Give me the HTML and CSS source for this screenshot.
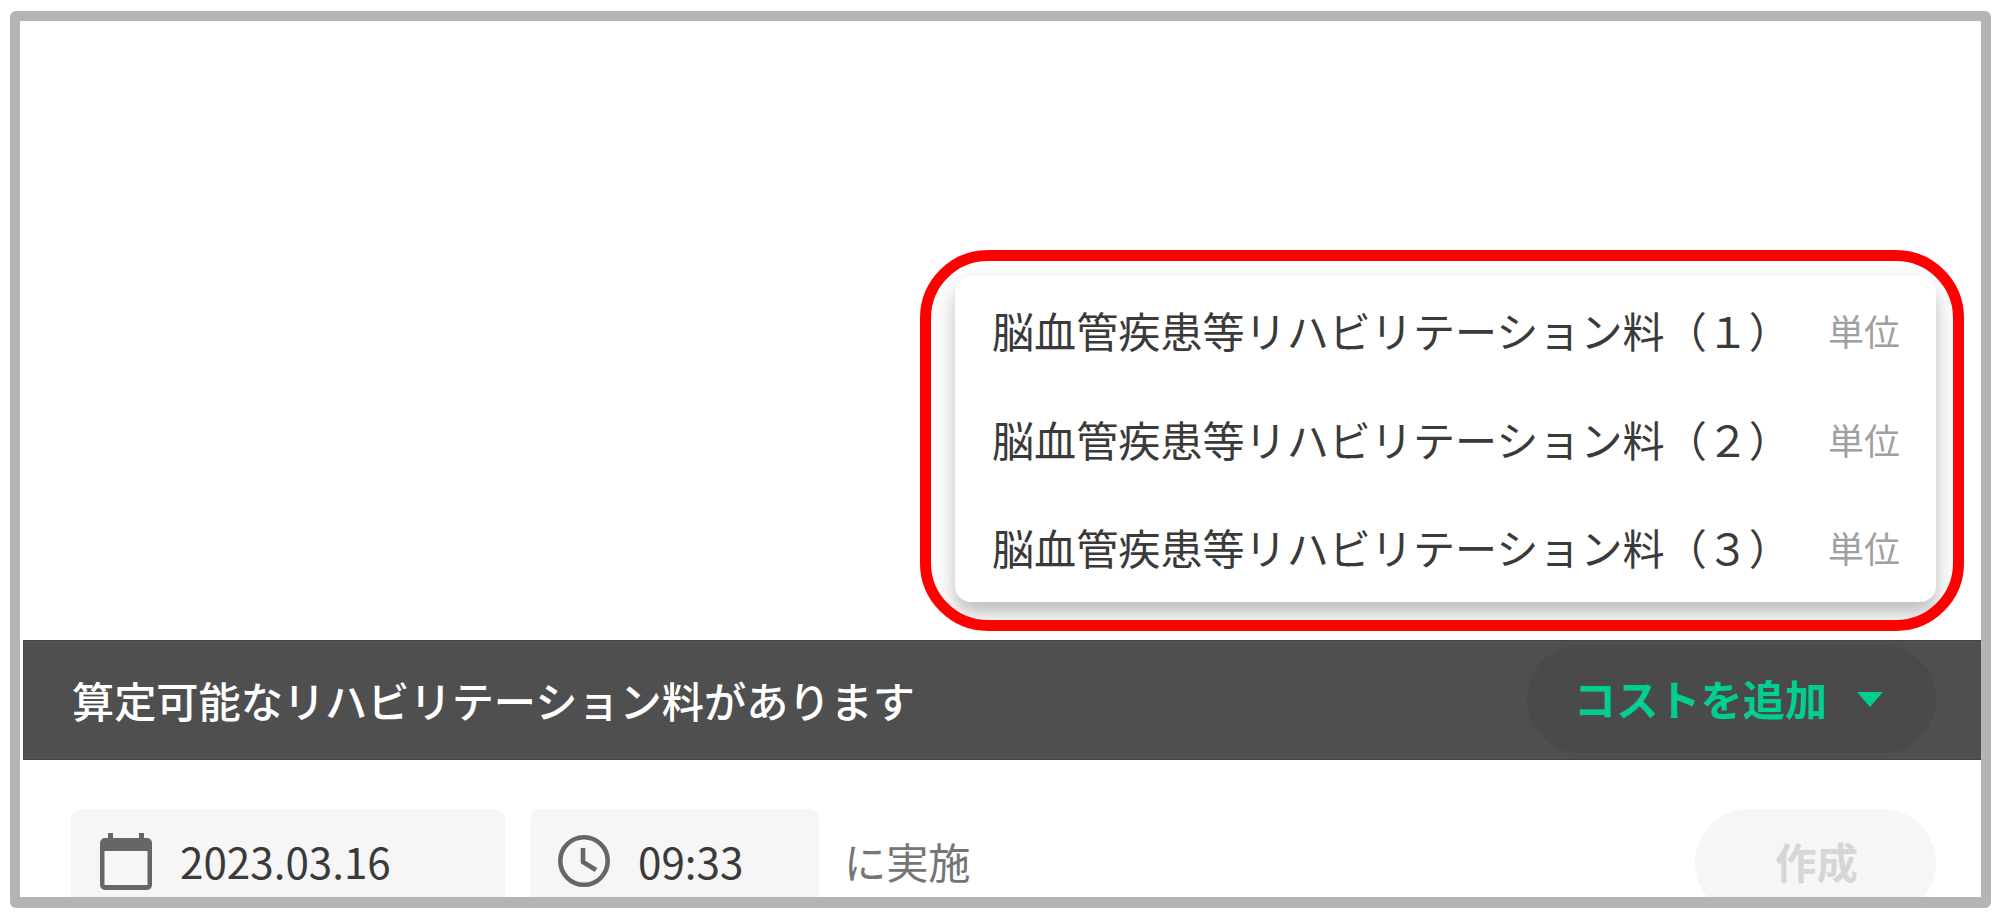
FILE: index.html
```html
<!DOCTYPE html>
<html lang="ja">
<head>
  <meta charset="UTF-8" />
  <title>リハビリテーション料</title>
  <meta name="viewport" content="width=device-width, initial-scale=1.0" />
  <link rel="stylesheet" href="styles.css">
</head>
<body>
  <main class="frame">
    <!-- Record area with the cost menu -->
    <section class="record">
      <div class="highlight">
        <ul class="cost-menu">
          <li><span>脳血管疾患等リハビリテーション料（１）</span><span class="unit">単位</span></li>
          <li><span>脳血管疾患等リハビリテーション料（２）</span><span class="unit">単位</span></li>
          <li><span>脳血管疾患等リハビリテーション料（３）</span><span class="unit">単位</span></li>
        </ul>
      </div>
    </section>

    <!-- Notice bar -->
    <section class="notice">
      <p>算定可能なリハビリテーション料があります</p>
      <button class="add-btn" type="button">
        <span>コストを追加</span>
        <svg class="caret" viewBox="0 0 26 15"><path d="M0 0h26L13 15z" /></svg>
      </button>
    </section>

    <!-- Date and time -->
    <section class="footer">
      <div class="field date">
        <svg class="icon-calendar" viewBox="0 0 52 57">
          <path fill-rule="evenodd" d="M8 0h5v5h26V0h5v5h3a5 5 0 0 1 5 5v42a5 5 0 0 1-5 5H5a5 5 0 0 1-5-5V10a5 5 0 0 1 5-5h3zM4.500 18v34h43V18z" />
        </svg>
        <span>2023.03.16</span>
      </div>
      <div class="field time">
        <svg class="icon-clock" viewBox="0 0 52 52">
          <circle cx="26" cy="26" r="23.700" />
          <path d="M25 13v14l13 8" />
        </svg>
        <span>09:33</span>
      </div>
      <span class="suffix">に実施</span>
      <button class="create-btn" type="button" disabled>作成</button>
    </section>
  </main>
</body>
</html>
```
FILE: styles.css
```css
* { box-sizing: border-box; }

body {
  font-family: "Noto Sans CJK JP", sans-serif;
  font-size: 42.2px;
  line-height: 60px;
  color: #3a3a3a;
  background-color: #fff;
  margin: 0;
  padding: 11px 9px 0 10px;
}

.frame {
  height: 897px;
  border: 10px solid #b4b4b4;
  border-bottom-width: 11px;
  border-radius: 6px;
  display: flex;
  flex-direction: column;
  overflow: hidden;
}

.record {
  height: 619px;
  flex-shrink: 0;
  display: flex;
  justify-content: flex-end;
  align-items: flex-end;
  padding: 0 17px 9px 0;
}

.highlight {
  width: 1044px;
  height: 381px;
  border: 11px solid #f00;
  border-radius: 68px;
  padding: 15px 17px 0 24px;
  overflow: hidden;
}

.cost-menu {
  list-style: none;
  margin: 0;
  height: 326px;
  padding: 0 36px 0 37px;
  border-radius: 16px;
  background-color: #fff;
  box-shadow: 0 12px 28px rgba(0, 0, 0, 0.2), 0 10px 10px rgba(0, 0, 0, 0.09);
  font-size: 42.1px;
}

.cost-menu li {
  height: 108.5px;
  display: flex;
  align-items: center;
  justify-content: space-between;
  white-space: nowrap;
}

.unit {
  font-size: 36px;
  color: #a0a0a0;
}

.notice {
  height: 120px;
  flex-shrink: 0;
  margin-left: 3px;
  padding: 0 45px 0 49px;
  display: flex;
  align-items: center;
  justify-content: space-between;
  background-color: #4f4f4f;
  border: solid #444;
  border-width: 1px 0;
  color: #fff;
  font-weight: 500;
}

.notice p { margin: 0; }

button {
  border: none;
  border-radius: 54px;
  font: inherit;
  font-weight: bold;
  height: 108px;
}

.add-btn {
  width: 409px;
  margin-bottom: 2px;
  padding: 0 53px 0 47px;
  display: flex;
  align-items: center;
  justify-content: space-between;
  background-color: #4a4a4a;
  color: #00cf91;
}

.add-btn span { padding-bottom: 3px; }

.caret {
  width: 26px;
  height: 15px;
  fill: #00cf91;
}

.footer {
  display: flex;
  align-items: flex-start;
  padding: 49px 45px 0 51px;
}

.field {
  height: 108px;
  padding-bottom: 4px;
  display: flex;
  align-items: center;
  border-radius: 10px;
  background-color: #f6f6f6;
}

.date {
  width: 434px;
  padding-left: 29px;
  gap: 28px;
}

.time {
  width: 289px;
  margin-left: 25px;
  padding-left: 28px;
  gap: 28px;
}

.icon-calendar {
  width: 52px;
  height: 57px;
  fill: #666;
}

.icon-clock {
  width: 52px;
  height: 52px;
  fill: none;
  stroke: #666;
  stroke-width: 4.6;
}

.suffix {
  margin-left: 25px;
  line-height: 104px;
  color: #757575;
}

.create-btn {
  width: 241px;
  margin-left: auto;
  padding: 0 4px 5px 6px;
  background-color: #f6f6f6;
  color: #d6d6d8;
  font-size: 41.5px;
}
```
